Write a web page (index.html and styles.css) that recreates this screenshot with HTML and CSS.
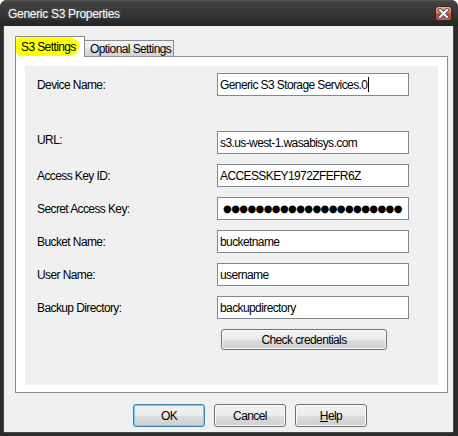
FILE: index.html
```html
<!DOCTYPE html>
<html>
<head>
<meta charset="utf-8">
<title>Generic S3 Properties</title>
<link rel="stylesheet" href="styles.css">
</head>
<body>
<div class="window">
  <div class="titlebar">
    <span class="title">Generic S3 Properties</span>
    <div class="close">
      <svg width="13" height="11" viewBox="0 0 13 11">
        <path d="M3 2 L10 9 M10 2 L3 9" stroke="#4a4a4a" stroke-width="4" stroke-linecap="square" fill="none"/>
        <path d="M3 2 L10 9 M10 2 L3 9" stroke="#ffffff" stroke-width="2" stroke-linecap="square" fill="none"/>
      </svg>
    </div>
  </div>
  <div class="client">
    <div class="tabs">
      <div class="tab active"><span class="hl">S3 Settings</span></div>
      <div class="tab inactive">Optional Settings</div>
    </div>
    <div class="panel">
      <div class="group">
        <div class="row"><span class="label">Device Name:</span><div class="field">Generic S3 Storage Services.0<span class="caret"></span></div></div>
        <div class="row url"><span class="label label-up">URL:</span><div class="field">s3.us-west-1.wasabisys.com</div></div>
        <div class="row"><span class="label">Access Key ID:</span><div class="field">ACCESSKEY1972ZFEFR6Z</div></div>
        <div class="row"><span class="label">Secret Access Key:</span><div class="field dots">●●●●●●●●●●●●●●●●●●●●●●</div></div>
        <div class="row"><span class="label">Bucket Name:</span><div class="field">bucketname</div></div>
        <div class="row"><span class="label">User Name:</span><div class="field">username</div></div>
        <div class="row"><span class="label">Backup Directory:</span><div class="field">backupdirectory</div></div>
        <button class="btn check">Check credentials</button>
      </div>
    </div>
    <div class="buttons">
      <button class="btn default">OK</button>
      <button class="btn">Cancel</button>
      <button class="btn"><u>H</u>elp</button>
    </div>
  </div>
</div>
</body>
</html>
```

FILE: styles.css
```css
* { box-sizing: border-box; }

body {
  margin: 0;
  background: #ffffff;
  font-family: "Liberation Sans", Arial, sans-serif;
  font-size: 12px;
  letter-spacing: -0.6px;
  color: #000;
}

.window {
  width: 458px;
  height: 436px;
  background: #2b2b2b;
  border-radius: 7px 7px 0 0;
  display: flex;
  flex-direction: column;
  overflow: hidden;
}

.titlebar {
  height: 26px;
  flex: none;
  display: flex;
  align-items: center;
  justify-content: space-between;
  padding: 0 6px 0 8px;
  background: linear-gradient(#5a5a5a 0, #404040 2px, #363636 50%, #242424 100%);
}

.title {
  font-size: 12px;
  letter-spacing: -0.3px;
  color: #ffffff;
  text-shadow: 0 0 3px rgba(255,255,255,0.35);
  padding-top: 1px;
}

.close {
  width: 17px;
  height: 15px;
  margin-top: 1px;
  border: 1px solid #4b2018;
  border-radius: 3px;
  background: linear-gradient(#eeb2a4 0, #dc7a66 45%, #c8432b 55%, #d9603f 100%);
  display: flex;
  align-items: center;
  justify-content: center;
}

.client {
  flex: 1;
  margin: 0 5px 4px 4px;
  background: #f0f0f0;
  box-shadow: -1px 0 0 #474747, 1px 0 0 #474747, 0 1px 0 #474747;
  padding: 10px 5px 0 11px;
  display: flex;
  flex-direction: column;
}

.tabs {
  display: flex;
  align-items: flex-end;
  height: 20px;
  flex: none;
  position: relative;
  z-index: 1;
}

.tab {
  border: 1px solid #898c95;
  border-bottom: none;
  display: flex;
  align-items: center;
  white-space: nowrap;
}

.tab.active {
  width: 70px;
  height: 21px;
  margin-bottom: -1px;
  background: #ffffff;
  align-items: flex-start;
}

.hl {
  display: flex;
  align-items: center;
  width: 63px;
  height: 19px;
  padding-left: 5px;
  background: #ffff00;
  border-radius: 5px 12px 9px 4px / 4px 8px 10px 7px;
}

.tab.inactive {
  width: 89px;
  height: 16px;
  border-left: none;
  padding-left: 5px;
  background: linear-gradient(#f3f3f3 0, #ebebeb 50%, #dedede 51%, #d2d2d2 100%);
}

.panel {
  flex: none;
  height: 337px;
  border: 1px solid #898c95;
  background: #ffffff;
  padding: 9px 9px 7px 9px;
}

.group {
  height: 100%;
  background: #f0f0f0;
  padding: 7px 0 0 12px;
  display: flex;
  flex-direction: column;
}

.row {
  display: flex;
  align-items: center;
  height: 23px;
}

.row + .row { margin-top: 10px; }
.row.url { margin-top: 35px; }

.label {
  width: 180px;
  white-space: nowrap;
}

.label-up { margin-top: -6px; }

.field {
  width: 192px;
  height: 23px;
  border: 1px solid #828790;
  background: #ffffff;
  padding: 0 2px;
  display: flex;
  align-items: center;
  white-space: nowrap;
  overflow: hidden;
}

.caret {
  display: inline-block;
  width: 1px;
  height: 15px;
  background: #000;
  margin-left: 1px;
}

.dots {
  font-family: "DejaVu Sans", sans-serif;
  font-size: 10px;
  padding-left: 5px;
  letter-spacing: -0.6px;
}

.btn {
  height: 23px;
  width: 72px;
  padding: 0;
  border: 1px solid #707070;
  border-radius: 3px;
  background: linear-gradient(#f2f2f2 0, #ebebeb 50%, #dddddd 50%, #cfcfcf 100%);
  box-shadow: inset 0 0 0 1px #fbfbfb;
  font: inherit;
  letter-spacing: -0.6px;
  color: #000;
}

.btn.default {
  border-color: #3c7fb1;
  box-shadow: inset 0 0 0 1px #6fd0f6;
}

.check {
  width: 166px;
  height: 21px;
  margin: 10px 0 0 184px;
  flex: none;
}

.buttons {
  display: flex;
  justify-content: flex-end;
  gap: 9px;
  padding: 11px 81px 0 0;
}
```
